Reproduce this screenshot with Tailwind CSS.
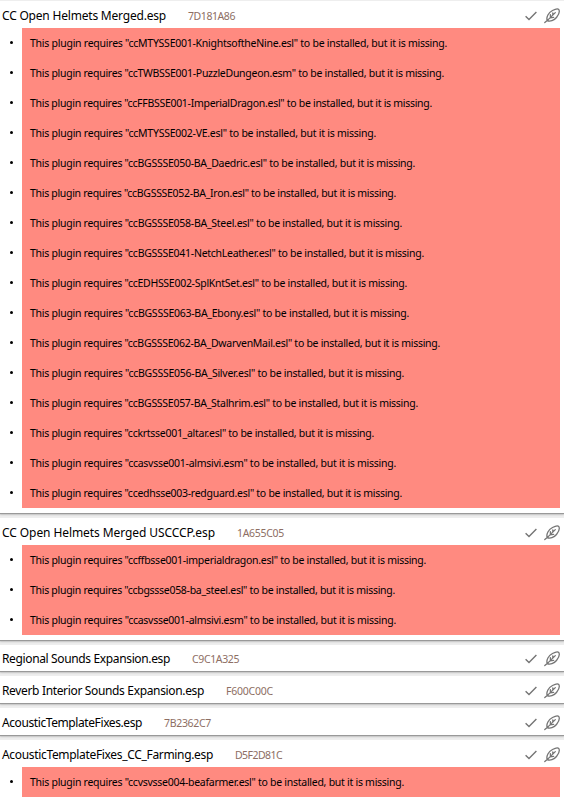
<!DOCTYPE html>
<html lang="en">
<head>
  <meta charset="UTF-8" />
  <meta name="viewport" content="width=device-width, initial-scale=1.0" />
  <title>Plugins</title>
  <script src="https://cdn.jsdelivr.net/npm/@tailwindcss/browser@4"></script>
</head>
<body class="bg-[#eeeeee] text-black font-['Noto_Sans','Open_Sans',sans-serif] overflow-hidden">

  <!-- Plugin cards -->
  <main id="plugins" class="pt-px h-[800px] overflow-hidden flex flex-col gap-[5px]"></main>

  <script>
    // Each text comes with its width in pixels
    const plugins = [
      { name: 'CC Open Helmets Merged.esp', w: 164, crc: '7D181A86', missing: [
        ['ccMTYSSE001-KnightsoftheNine.esl', 417],
        ['ccTWBSSE001-PuzzleDungeon.esm', 414],
        ['ccFFBSSE001-ImperialDragon.esl', 402],
        ['ccMTYSSE002-VE.esl', 346],
        ['ccBGSSSE050-BA_Daedric.esl', 385],
        ['ccBGSSSE052-BA_Iron.esl', 366],
        ['ccBGSSSE058-BA_Steel.esl', 372],
        ['ccBGSSSE041-NetchLeather.esl', 394],
        ['ccEDHSSE002-SplKntSet.esl', 377],
        ['ccBGSSSE063-BA_Ebony.esl', 379],
        ['ccBGSSSE062-BA_DwarvenMail.esl', 410],
        ['ccBGSSSE056-BA_Silver.esl', 374],
        ['ccBGSSSE057-BA_Stalhrim.esl', 388],
        ['cckrtsse001_altar.esl', 344],
        ['ccasvsse001-almsivi.esm', 366],
        ['ccedhsse003-redguard.esl', 372],
      ] },
      { name: 'CC Open Helmets Merged USCCCP.esp', w: 213, crc: '1A655C05', missing: [
        ['ccffbsse001-imperialdragon.esl', 396],
        ['ccbgssse058-ba_steel.esl', 365],
        ['ccasvsse001-almsivi.esm', 366],
      ] },
      { name: 'Regional Sounds Expansion.esp', w: 168, crc: 'C9C1A325', missing: [] },
      { name: 'Reverb Interior Sounds Expansion.esp', w: 202, crc: 'F600C00C', missing: [] },
      { name: 'AcousticTemplateFixes.esp', w: 140, crc: '7B2362C7', missing: [] },
      { name: 'AcousticTemplateFixes_CC_Farming.esp', w: 211, crc: 'D5F2D81C', missing: [
        ['ccvsvsse004-beafarmer.esl', 374],
      ] },
    ];

    const icons = `
      <svg class="w-3 h-3 mr-[7px]" viewBox="0 0 12 12" fill="none" stroke="#757575" stroke-width="1.4"><path d="M.6 6.2 4 9.5 11.4 2"/></svg>
      <svg class="w-4 h-4" viewBox="0 0 16 16" fill="none" stroke="#757575" stroke-width="1.3" stroke-linecap="round" stroke-linejoin="round"><path d="M.8 14.6 3.2 12.6C2 9 4.5 4.5 8.5 2.5 11 1.2 14 .7 14.8 1.5 15.6 3 15 6.5 12.5 9.5 10 12.5 6 14 3.2 12.6L11.3 4.6M6.4 9.4V6.6M6.2 9.8 9.6 9.4M8.8 7V5"/></svg>`;

    const ctx = document.createElement('canvas').getContext('2d');

    // Letter spacing that makes a text take the given width
    function tracking(text, size, width) {
      ctx.font = `${size}px "Noto Sans"`;
      return `letter-spacing:${((width - ctx.measureText(text).width) / text.length).toFixed(3)}px`;
    }

    function message(file, width) {
      const text = `This plugin requires "${file}" to be installed, but it is missing.`;
      return `
        <li class="relative h-[30px] pl-2 flex items-center bg-[#ff8a80] text-[10.5px] leading-4 whitespace-nowrap">
          <span class="absolute -left-3 w-[3px] h-[3px] rounded-full bg-black"></span>
          <span style="${tracking(text, 10.5, width)}">${text}</span>
        </li>`;
    }

    document.getElementById('plugins').innerHTML = plugins.map(p => `
      <section class="bg-white shrink-0 shadow-[0_1px_1px_#999,0_2px_2px_#ccc]">
        <div class="h-[26.8px] pt-[3px] pl-[2px] pr-1 flex items-center">
          <h2 class="text-[12px] leading-4 whitespace-nowrap" style="${tracking(p.name, 12, p.w)}">${p.name}</h2>
          <span class="ml-[22px] text-[10.5px] leading-4 text-[#8d6e63] whitespace-nowrap" style="${tracking(p.crc, 10.5, 47)}">${p.crc}</span>
          <div class="ml-auto flex items-center">${icons}</div>
        </div>
        ${p.missing.length ? `<ul class="pl-[22px] pr-1 pb-[5px]">${p.missing.map(m => message(m[0], m[1])).join('')}</ul>` : ''}
      </section>`).join('');
  </script>
</body>
</html>
